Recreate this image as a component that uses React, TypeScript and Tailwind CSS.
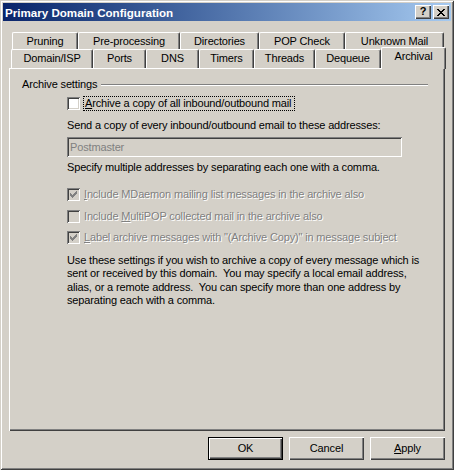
import type { ReactNode } from 'react';

const FONT = "font-['Liberation_Sans',Arial,sans-serif]";
const DIS = 'text-[#808080] [text-shadow:1px_1px_0_#ffffff]';

function Check({ checked, disabled }: { checked?: boolean; disabled?: boolean }) {
    return (
        <div
            className={`w-[13px] h-[13px] shrink-0 flex items-center justify-center shadow-[inset_1px_1px_#808080,inset_-1px_-1px_#ffffff,inset_2px_2px_#404040,inset_-2px_-2px_#d4d0c8] ${disabled ? 'bg-[#d4d0c8]' : 'bg-white'}`}
        >
            {checked && (
                <svg width="7" height="7" viewBox="0 0 7 7" fill={disabled ? '#808080' : '#000000'}>
                    <path d="M0 2h1v3H0zM1 3h1v3H1zM2 4h1v3H2zM3 3h1v3H3zM4 2h1v3H4zM5 1h1v3H5zM6 0h1v3H6z" />
                </svg>
            )}
        </div>
    );
}

function CheckRow({ checked, disabled, children, h }: { checked?: boolean; disabled?: boolean; children: ReactNode; h: string }) {
    return (
        <div className={`flex items-center gap-[4px] ${h}`}>
            <Check checked={checked} disabled={disabled} />
            <span className={`leading-[13px] whitespace-nowrap ${disabled ? DIS : ''}`}>{children}</span>
        </div>
    );
}

function Tab({ label, w, h = 'h-[18px]' }: { label: string; w: string; h?: string }) {
    return (
        <div
            className={`${w} ${h} shrink-0 flex justify-center items-start pt-[2px] leading-[13px] border-t border-l border-white border-r border-r-[#404040] shadow-[inset_-1px_0_#808080] rounded-t-[2px] bg-[#d4d0c8]`}
        >
            {label}
        </div>
    );
}

function Button({ children, isDefault }: { children: ReactNode; isDefault?: boolean }) {
    return (
        <div
            className={`w-[75px] h-[23px] flex items-center justify-center leading-[13px] bg-[#d4d0c8] ${
                isDefault
                    ? 'border border-black shadow-[inset_1px_1px_#ffffff,inset_-1px_-1px_#404040,inset_-2px_-2px_#808080]'
                    : 'shadow-[inset_1px_1px_#ffffff,inset_-1px_-1px_#404040,inset_-2px_-2px_#808080]'
            }`}
        >
            {children}
        </div>
    );
}

function CaptionButton({ children }: { children: ReactNode }) {
    return (
        <div className="w-[16px] h-[14px] flex items-center justify-center bg-[#d4d0c8] shadow-[inset_1px_1px_#ffffff,inset_-1px_-1px_#404040,inset_-2px_-2px_#808080]">
            {children}
        </div>
    );
}

export default function App() {
    const row1 = [
        ['Pruning', 'w-[66px]'],
        ['Pre-processing', 'w-[102px]'],
        ['Directories', 'w-[79px]'],
        ['POP Check', 'w-[86px]'],
        ['Unknown Mail', 'w-[99px]'],
    ];
    const row2 = [
        ['Domain/ISP', 'w-[82px]'],
        ['Ports', 'w-[53px]'],
        ['DNS', 'w-[53px]'],
        ['Timers', 'w-[55px]'],
        ['Threads', 'w-[61px]'],
        ['Dequeue', 'w-[66px]'],
    ];

    return (
        <div
            className={`${FONT} text-[11px] tracking-[-0.15px] text-black w-[454px] h-[470px] bg-[#d4d0c8] p-[3px] flex flex-col shadow-[inset_1px_1px_#d4d0c8,inset_-1px_-1px_#404040,inset_2px_2px_#ffffff,inset_-2px_-2px_#808080]`}
        >
            {/* Caption */}
            <div className="h-[18px] shrink-0 flex items-center bg-gradient-to-r from-[#0a246a] to-[#a6caf0] pl-[2px] pr-[2px]">
                <span className="flex-1 text-white font-bold text-[11.6px] tracking-normal leading-[13px]">Primary Domain Configuration</span>
                <div className="flex gap-[2px]">
                    <CaptionButton>
                        <span className="font-bold text-[11px] leading-[11px] -mt-[1px]">?</span>
                    </CaptionButton>
                    <CaptionButton>
                        <svg width="8" height="7" viewBox="0 0 8 7" fill="#000">
                            <path d="M0 0h2v1H0zM6 0h2v1H6zM1 1h2v1H1zM5 1h2v1H5zM2 2h4v1H2zM3 3h2v1H3zM2 4h4v1H2zM1 5h2v1H1zM5 5h2v1H5zM0 6h2v1H0zM6 6h2v1H6z" />
                        </svg>
                    </CaptionButton>
                </div>
            </div>

            {/* Tabs + panel */}
            <div className="pt-[11px] px-[6px] flex flex-col">
                <div className="flex ml-[3px]">
                    {row1.map(([l, w]) => (
                        <Tab key={l} label={l} w={w} />
                    ))}
                </div>
                <div className="flex ml-[2px] -mt-[1px] h-[19px] items-end relative z-10">
                    {row2.map(([l, w]) => (
                        <Tab key={l} label={l} w={w} h="h-[19px]" />
                    ))}
                    <div className="w-[65px] h-[22px] -mb-[1px] shrink-0 flex justify-center items-start pt-[2px] leading-[13px] border-t border-l border-white border-r border-r-[#404040] shadow-[inset_-1px_0_#808080] rounded-t-[2px] bg-[#d4d0c8]">
                        Archival
                    </div>
                </div>

                <div className="w-[436px] h-[363px] shadow-[inset_1px_1px_#ffffff,inset_-1px_-1px_#404040,inset_-2px_-2px_#808080] pt-[10px] pl-[13px] pr-[17px]">
                    <div className="flex items-center h-[13px]">
                        <span className="leading-[13px] pr-[4px]">Archive settings</span>
                        <div className="flex-1 h-[2px] border-t border-t-[#808080] border-b border-b-white" />
                    </div>

                    <div className="pl-[45px]">
                        <div className="flex items-center gap-[3px] h-[15px] mt-[5px]">
                            <Check />
                            <span className="leading-[13px] border border-dotted border-black pl-[1px] pr-[3px]">
                                <u>A</u>rchive a copy of all inbound/outbound mail
                            </span>
                        </div>

                        <div className="leading-[13px] mt-[8px]">Send a copy of every inbound/outbound email to these addresses:</div>

                        <div className="w-[335px] h-[20px] mt-[5px] flex items-center pl-[3px] leading-[13px] text-[#808080] bg-[#d4d0c8] shadow-[inset_1px_1px_#808080,inset_-1px_-1px_#ffffff,inset_2px_2px_#404040,inset_-2px_-2px_#d4d0c8]">
                            Postmaster
                        </div>

                        <div className="leading-[13px] mt-[4px]">Specify multiple addresses by separating each one with a comma.</div>

                        <div className="mt-[10px] flex flex-col">
                            <CheckRow checked disabled h="h-[21px]">
                                <u>I</u>nclude MDaemon mailing list messages in the archive also
                            </CheckRow>
                            <CheckRow disabled h="h-[22px]">
                                Include <u>M</u>ultiPOP collected mail in the archive also
                            </CheckRow>
                            <CheckRow checked disabled h="h-[21px]">
                                <u>L</u>abel archive messages with "(Archive Copy)" in message subject
                            </CheckRow>
                        </div>

                        <p className="mt-[6px] leading-[13.33px] whitespace-nowrap">
                            Use these settings if you wish to archive a copy of every message which is
                            <br />
                            sent or received by this domain.&nbsp; You may specify a local email address,
                            <br />
                            alias, or a remote address.&nbsp; You can specify more than one address by
                            <br />
                            separating each with a comma.
                        </p>
                    </div>
                </div>
            </div>

            {/* Buttons */}
            <div className="flex justify-end gap-[6px] px-[6px] mt-[6px]">
                <Button isDefault>OK</Button>
                <Button>Cancel</Button>
                <Button>
                    <span>
                        <u>A</u>pply
                    </span>
                </Button>
            </div>
        </div>
    );
}
